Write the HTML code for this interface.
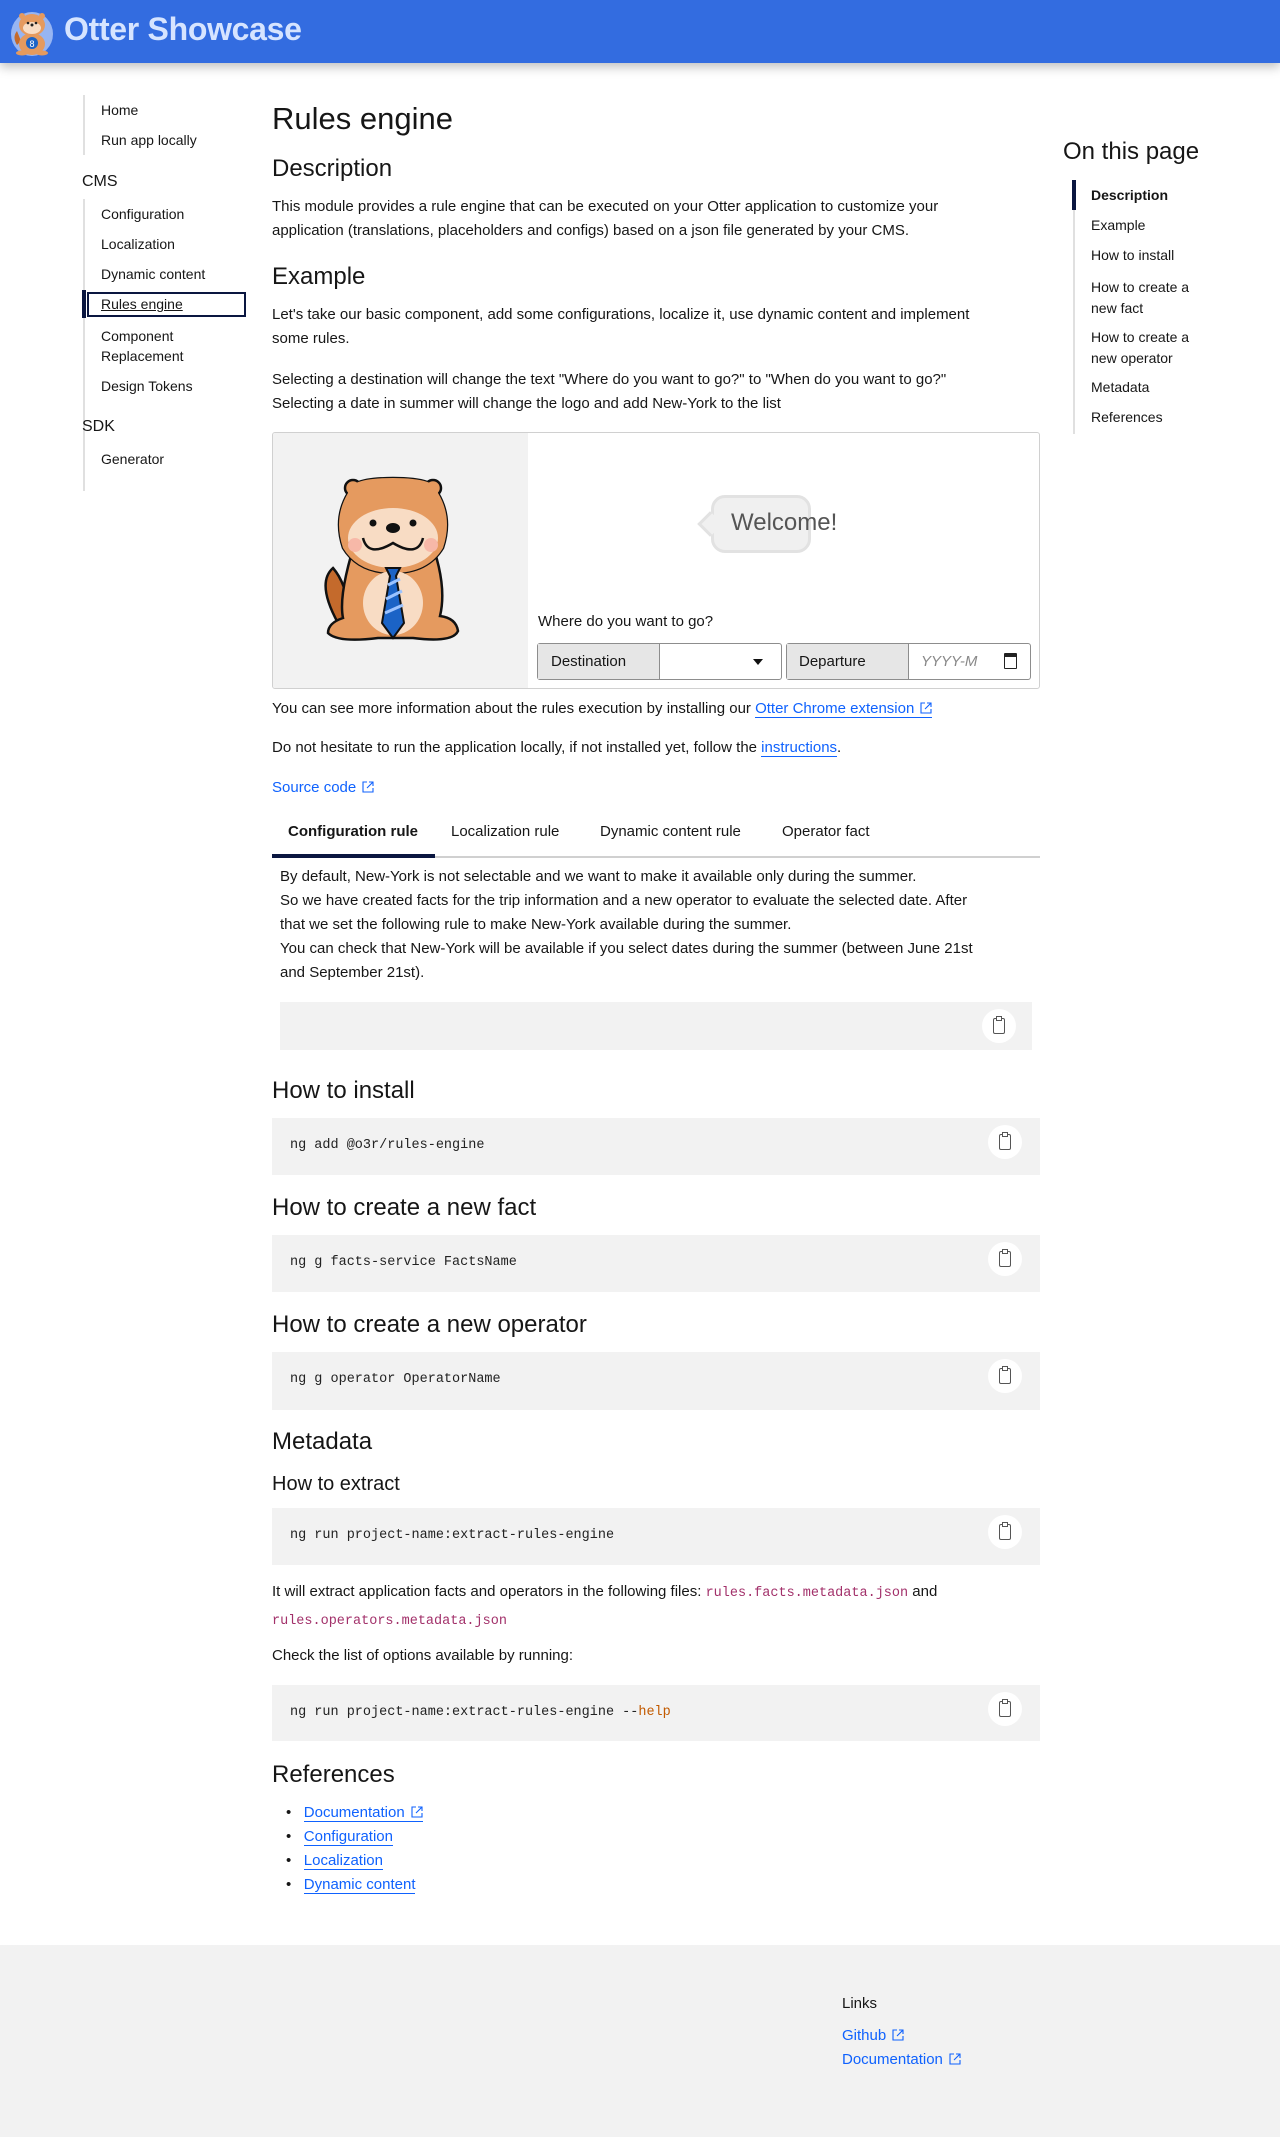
<!DOCTYPE html>
<html><head><meta charset="utf-8"><style>
*{box-sizing:border-box;margin:0;padding:0}
body{width:1280px;height:2137px;position:relative;font-family:"Liberation Sans",sans-serif;color:#161616;background:#fff;overflow:hidden}
.a{position:absolute;white-space:nowrap}
.hdr{position:absolute;left:0;top:0;width:1280px;height:63px;background:#336ce0;box-shadow:0 4px 10px rgba(0,0,0,.25)}
.side{font-size:14px;color:#161616}
.p{font-size:15px;line-height:24px}
h1,h2,h3{font-weight:400;position:absolute;white-space:nowrap}
h1{font-size:31px}
h2{font-size:24px}
h3{font-size:20px}
.code{position:absolute;left:272px;width:768px;background:#f2f2f2}
.code span.t{position:absolute;left:18px;font-family:"Liberation Mono",monospace;font-size:13.5px;color:#222}
.cp{position:absolute;right:18px;width:34px;height:34px;border-radius:50%;background:#fff}
.cp:after{content:"";position:absolute;left:11px;top:9px;width:10px;height:14px;border:1.3px solid #555;border-radius:2px}
.cp:before{content:"";position:absolute;left:14px;top:7px;width:4px;height:3px;border:1.3px solid #555;background:#fff;z-index:1}
a,.lk{color:#0f62fe;text-decoration:none;border-bottom:1px solid #0f62fe}
.ext{display:inline-block;width:12px;height:12px;margin-left:6px;vertical-align:-1px}
.toc{font-size:14px}
</style></head><body>
<div class="hdr">
<svg class="a" style="left:9px;top:7px" width="46" height="50" viewBox="0 0 46 50">
<ellipse cx="23" cy="27" rx="21" ry="22" fill="#dbe6ff" opacity=".6"/>
<path d="M8 38 Q3 30 8 24 L12 34Z" fill="#c46a2c"/>
<ellipse cx="23" cy="37" rx="13" ry="11" fill="#e59a5f"/>
<ellipse cx="23" cy="18" rx="13" ry="11" fill="#e59a5f"/>
<circle cx="13" cy="9" r="3" fill="#e59a5f"/><circle cx="33" cy="9" r="3" fill="#e59a5f"/>
<ellipse cx="23" cy="21" rx="9" ry="6" fill="#f8dcc4"/>
<circle cx="19" cy="16" r="1.3" fill="#222"/><circle cx="27" cy="16" r="1.3" fill="#222"/><circle cx="23" cy="18" r="1.5" fill="#222"/>
<circle cx="23" cy="36" r="6" fill="#1b63c6"/><text x="20.5" y="40" font-size="9" fill="#fff" font-family="Liberation Sans">8</text>
<ellipse cx="13" cy="46" rx="6" ry="2.5" fill="#e59a5f"/><ellipse cx="33" cy="46" rx="6" ry="2.5" fill="#e59a5f"/>
</svg>
<div class="a" style="left:64px;top:11px;font-size:32px;font-weight:700;color:#d6e4ff;letter-spacing:-.3px">Otter Showcase</div>
</div>

<!-- sidebar -->
<div class="a" style="left:83px;top:95px;width:2px;height:60px;background:#e0e0e0"></div>
<div class="a side" style="left:101px;top:102px">Home</div>
<div class="a side" style="left:101px;top:132px">Run app locally</div>
<div class="a" style="left:82px;top:173px;font-size:16px">CMS</div>
<div class="a" style="left:83px;top:199px;width:2px;height:292px;background:#e0e0e0"></div>
<div class="a side" style="left:101px;top:206px">Configuration</div>
<div class="a side" style="left:101px;top:236px">Localization</div>
<div class="a side" style="left:101px;top:266px">Dynamic content</div>
<div class="a" style="left:82px;top:290px;width:4px;height:28px;background:#0a1640"></div>
<div class="a" style="left:87px;top:292px;width:159px;height:25px;border:2px solid #0a1640"></div>
<div class="a side" style="left:101px;top:296px;text-decoration:underline">Rules engine</div>
<div class="a side" style="left:101px;top:326px;line-height:20px">Component<br>Replacement</div>
<div class="a side" style="left:101px;top:378px">Design Tokens</div>
<div class="a" style="left:82px;top:418px;font-size:16px">SDK</div>
<div class="a" style="left:83px;top:444px;width:2px;height:30px;background:#e0e0e0"></div>
<div class="a side" style="left:101px;top:451px">Generator</div>

<!-- main -->
<h1 style="left:272px;top:101px">Rules engine</h1>
<h2 style="left:272px;top:155px">Description</h2>
<div class="a p" style="left:272px;top:195px">This module provides a rule engine that can be executed on your Otter application to customize your<br>application (translations, placeholders and configs) based on a json file generated by your CMS.</div>
<h2 style="left:272px;top:263px">Example</h2>
<div class="a p" style="left:272px;top:303px">Let's take our basic component, add some configurations, localize it, use dynamic content and implement<br>some rules.</div>
<div class="a p" style="left:272px;top:368px">Selecting a destination will change the text "Where do you want to go?" to "When do you want to go?"<br>Selecting a date in summer will change the logo and add New-York to the list</div>

<div class="a" style="left:272px;top:432px;width:768px;height:257px;border:1px solid #d0d0d0;border-radius:3px;overflow:hidden">
<div class="a" style="left:0;top:0;width:255px;height:257px;background:#f2f2f2"></div>
<svg class="a" style="left:45px;top:40px" width="150" height="170" viewBox="0 0 150 170">
<g stroke="#111" stroke-width="2.5">
<path d="M20 150 Q-2 110 15 95 Q28 110 32 140Z" fill="#c46a2c"/>
<path d="M40 60 Q20 120 25 145 Q10 150 10 160 Q20 170 60 165 L95 165 Q135 170 140 158 Q138 145 122 143 Q130 110 110 60Z" fill="#e59a5f"/>
<path d="M30 20 Q30 5 75 5 Q120 5 120 20 Q135 45 125 75 Q110 100 75 100 Q40 100 25 75 Q15 45 30 20Z" fill="#e59a5f"/>
<circle cx="35" cy="15" r="8" fill="#e59a5f"/><circle cx="115" cy="15" r="8" fill="#e59a5f"/>
</g>
<path d="M30 20 Q30 5 75 5 Q120 5 120 20 Q135 45 125 75 Q110 100 75 100 Q40 100 25 75 Q15 45 30 20Z" fill="#e59a5f"/>
<ellipse cx="75" cy="65" rx="45" ry="30" fill="#f8dcc4"/>
<ellipse cx="75" cy="130" rx="30" ry="32" fill="#f8dcc4"/>
<circle cx="37" cy="72" r="7" fill="#f7b8a8"/><circle cx="113" cy="72" r="7" fill="#f7b8a8"/>
<circle cx="55" cy="50" r="3.5" fill="#111"/><circle cx="95" cy="50" r="3.5" fill="#111"/>
<ellipse cx="75" cy="55" rx="7" ry="5" fill="#111"/>
<path d="M45 65 Q50 85 75 70 Q100 85 105 65" fill="none" stroke="#111" stroke-width="2.5"/>
<path d="M68 95 L82 95 L78 103 L86 150 L75 165 L64 150 L72 103Z" fill="#1b63c6" stroke="#111" stroke-width="2"/>
<path d="M70 112 L82 106 M68 126 L84 118 M67 140 L85 132" stroke="#9cc3ff" stroke-width="3"/>
</svg>
<div class="a" style="left:438px;top:62px;width:100px;height:58px;background:#f0f0f0;border:3px solid #e2e2e2;border-radius:14px"></div>
<div class="a" style="left:428px;top:82px;width:18px;height:18px;background:#f0f0f0;transform:rotate(45deg);border-left:3px solid #e2e2e2;border-bottom:3px solid #e2e2e2"></div>
<div class="a" style="left:458px;top:76px;font-size:24px;color:#555">Welcome!</div>
<div class="a" style="left:265px;top:180px;font-size:15px">Where do you want to go?</div>
<div class="a" style="left:264px;top:210px;width:245px;height:37px;border:1px solid #8d8d8d;border-radius:3px;background:#fff">
<div class="a" style="left:0;top:0;width:122px;height:35px;background:#e6e6e6;border-right:1px solid #8d8d8d"></div>
<div class="a" style="left:13px;top:9px;font-size:15px">Destination</div>
<div class="a" style="left:215px;top:15px;width:0;height:0;border-left:5px solid transparent;border-right:5px solid transparent;border-top:6px solid #111"></div></div>
<div class="a" style="left:513px;top:210px;width:245px;height:37px;border:1px solid #8d8d8d;border-radius:3px;background:#fff">
<div class="a" style="left:0;top:0;width:122px;height:35px;background:#e6e6e6;border-right:1px solid #8d8d8d"></div>
<div class="a" style="left:12px;top:9px;font-size:15px">Departure</div>
<div class="a" style="left:134px;top:9px;font-size:15px;font-style:italic;color:#888">YYYY-M</div>
<div class="a" style="left:217px;top:9px;width:13px;height:16px;border:1.5px solid #222;border-radius:1px;border-top-width:4px"></div></div>
</div>

<div class="a p" style="left:272px;top:697px">You can see more information about the rules execution by installing our <span class="lk">Otter Chrome extension<svg class="ext" viewBox="0 0 12 12"><path d="M5 1H1v10h10V7M7 1h4v4M11 1 5 7" fill="none" stroke="#0f62fe" stroke-width="1.1"/></svg></span></div>
<div class="a p" style="left:272px;top:736px">Do not hesitate to run the application locally, if not installed yet, follow the <span class="lk">instructions</span>.</div>
<div class="a p" style="left:272px;top:776px;color:#0f62fe">Source code<svg class="ext" viewBox="0 0 12 12"><path d="M5 1H1v10h10V7M7 1h4v4M11 1 5 7" fill="none" stroke="#0f62fe" stroke-width="1.1"/></svg></div>

<div class="a" style="left:272px;top:856px;width:768px;height:2px;background:#d0d0d0"></div>
<div class="a" style="left:272px;top:854px;width:163px;height:4px;background:#0a1640"></div>
<div class="a" style="left:288px;top:823px;font-size:15px;font-weight:700">Configuration rule</div>
<div class="a" style="left:451px;top:823px;font-size:15px">Localization rule</div>
<div class="a" style="left:600px;top:823px;font-size:15px">Dynamic content rule</div>
<div class="a" style="left:782px;top:823px;font-size:15px">Operator fact</div>
<div class="a p" style="left:280px;top:865px">By default, New-York is not selectable and we want to make it available only during the summer.<br>So we have created facts for the trip information and a new operator to evaluate the selected date. After<br>that we set the following rule to make New-York available during the summer.<br>You can check that New-York will be available if you select dates during the summer (between June 21st<br>and September 21st).</div>
<div class="code" style="left:280px;top:1002px;width:752px;height:48px"><div class="cp" style="top:7px;right:16px"></div></div>

<h2 style="left:272px;top:1077px">How to install</h2>
<div class="code" style="top:1118px;height:57px"><span class="t" style="top:20px">ng add @o3r/rules-engine</span><div class="cp" style="top:7px"></div></div>
<h2 style="left:272px;top:1194px">How to create a new fact</h2>
<div class="code" style="top:1235px;height:57px"><span class="t" style="top:20px">ng g facts-service FactsName</span><div class="cp" style="top:7px"></div></div>
<h2 style="left:272px;top:1311px">How to create a new operator</h2>
<div class="code" style="top:1352px;height:58px"><span class="t" style="top:20px">ng g operator OperatorName</span><div class="cp" style="top:7px"></div></div>
<h2 style="left:272px;top:1428px">Metadata</h2>
<h3 style="left:272px;top:1473px">How to extract</h3>
<div class="code" style="top:1508px;height:57px"><span class="t" style="top:20px">ng run project-name:extract-rules-engine</span><div class="cp" style="top:7px"></div></div>
<div class="a p" style="left:272px;top:1579px;line-height:26px">It will extract application facts and operators in the following files: <span style="font-family:'Liberation Mono',monospace;font-size:13.5px;color:#a2306a">rules.facts.metadata.json</span> and<br><span style="font-family:'Liberation Mono',monospace;font-size:13.5px;color:#a2306a">rules.operators.metadata.json</span></div>
<div class="a p" style="left:272px;top:1644px">Check the list of options available by running:</div>
<div class="code" style="top:1685px;height:56px"><span class="t" style="top:20px">ng run project-name:extract-rules-engine --<span style="color:#c25a00">help</span></span><div class="cp" style="top:7px"></div></div>
<h2 style="left:272px;top:1761px">References</h2>
<div class="a p" style="left:286px;top:1801px;line-height:24px">
<div>•&nbsp;&nbsp;&nbsp;<span class="lk">Documentation<svg class="ext" viewBox="0 0 12 12"><path d="M5 1H1v10h10V7M7 1h4v4M11 1 5 7" fill="none" stroke="#0f62fe" stroke-width="1.1"/></svg></span></div>
<div>•&nbsp;&nbsp;&nbsp;<span class="lk">Configuration</span></div>
<div>•&nbsp;&nbsp;&nbsp;<span class="lk">Localization</span></div>
<div>•&nbsp;&nbsp;&nbsp;<span class="lk">Dynamic content</span></div>
</div>

<!-- TOC -->
<div class="a" style="left:1063px;top:138px;font-size:24px">On this page</div>
<div class="a" style="left:1073px;top:180px;width:2px;height:254px;background:#e0e0e0"></div>
<div class="a" style="left:1072px;top:180px;width:4px;height:30px;background:#0a1640"></div>
<div class="a toc" style="left:1091px;top:187px;font-weight:700">Description</div>
<div class="a toc" style="left:1091px;top:217px">Example</div>
<div class="a toc" style="left:1091px;top:247px">How to install</div>
<div class="a toc" style="left:1091px;top:277px;line-height:21px">How to create a<br>new fact</div>
<div class="a toc" style="left:1091px;top:327px;line-height:21px">How to create a<br>new operator</div>
<div class="a toc" style="left:1091px;top:379px">Metadata</div>
<div class="a toc" style="left:1091px;top:409px">References</div>

<!-- footer -->
<div class="a" style="left:0;top:1945px;width:1280px;height:192px;background:#f2f2f2"></div>
<div class="a" style="left:842px;top:1995px;font-size:15px">Links</div>
<div class="a" style="left:842px;top:2027px;font-size:15px;color:#0f62fe">Github<svg class="ext" viewBox="0 0 12 12"><path d="M5 1H1v10h10V7M7 1h4v4M11 1 5 7" fill="none" stroke="#0f62fe" stroke-width="1.1"/></svg></div>
<div class="a" style="left:842px;top:2051px;font-size:15px;color:#0f62fe">Documentation<svg class="ext" viewBox="0 0 12 12"><path d="M5 1H1v10h10V7M7 1h4v4M11 1 5 7" fill="none" stroke="#0f62fe" stroke-width="1.1"/></svg></div>
</body></html>
